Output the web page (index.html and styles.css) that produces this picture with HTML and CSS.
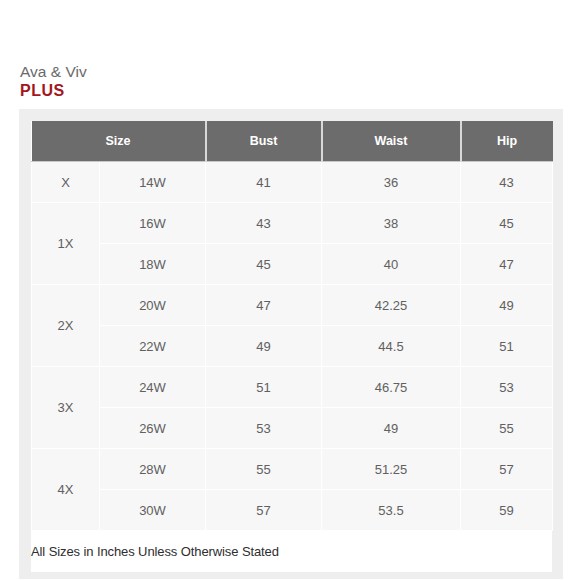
FILE: index.html
```html
<!DOCTYPE html>
<html>
<head>
<meta charset="utf-8">
<link rel="stylesheet" href="styles.css">
</head>
<body>
<div class="page">
  <div class="brand">
    <div class="brand-name">Ava &amp; Viv</div>
    <div class="brand-line">PLUS</div>
  </div>
  <div class="panel">
    <div class="sheet">
      <table class="chart">
        <colgroup>
          <col class="c1"><col class="c2"><col class="c3"><col class="c4"><col class="c5">
        </colgroup>
        <thead>
          <tr><th colspan="2">Size</th><th>Bust</th><th>Waist</th><th>Hip</th></tr>
        </thead>
        <tbody>
          <tr><td>X</td><td>14W</td><td>41</td><td>36</td><td>43</td></tr>
          <tr><td rowspan="2">1X</td><td>16W</td><td>43</td><td>38</td><td>45</td></tr>
          <tr><td>18W</td><td>45</td><td>40</td><td>47</td></tr>
          <tr><td rowspan="2">2X</td><td>20W</td><td>47</td><td>42.25</td><td>49</td></tr>
          <tr><td>22W</td><td>49</td><td>44.5</td><td>51</td></tr>
          <tr><td rowspan="2">3X</td><td>24W</td><td>51</td><td>46.75</td><td>53</td></tr>
          <tr><td>26W</td><td>53</td><td>49</td><td>55</td></tr>
          <tr><td rowspan="2">4X</td><td>28W</td><td>55</td><td>51.25</td><td>57</td></tr>
          <tr><td>30W</td><td>57</td><td>53.5</td><td>59</td></tr>
        </tbody>
      </table>
      <p class="note">All Sizes in Inches Unless Otherwise Stated</p>
    </div>
  </div>
</div>
</body>
</html>
```
FILE: styles.css
```css
html, body {
  margin: 0;
  padding: 0;
  background: #ffffff;
}
.page {
  padding: 63px 17px 0 19px;
  font-family: "Liberation Sans", Arial, sans-serif;
}
.brand {
  padding-left: 1px;
  margin-bottom: 9px;
}
.brand-name {
  font-size: 15.5px;
  line-height: 18px;
  color: #6a6a6a;
  letter-spacing: 0;
}
.brand-line {
  font-size: 16px;
  line-height: 19px;
  font-weight: bold;
  color: #a3161d;
  letter-spacing: 0.5px;
}
.panel {
  background: #eeeeee;
  padding: 12px 11px 7px 12px;
}
.sheet {
  background: #ffffff;
}
.chart {
  width: 100%;
  border-collapse: collapse;
  table-layout: fixed;
}
.c1 { width: 68px; }
.c2 { width: 106px; }
.c3 { width: 116px; }
.c4 { width: 139px; }
.c5 { width: 92px; }
.chart th {
  background: #6c6c6c;
  color: #ffffff;
  font-weight: bold;
  font-size: 12.5px;
  height: 40px;
  padding: 0;
  border-left: 2px solid #d8d8d8;
  border-bottom: 1px solid #c8c8c8;
}
.chart th:first-child {
  border-left: none;
}
.chart td {
  background: #f7f7f7;
  color: #606060;
  font-size: 13px;
  text-align: center;
  height: 40px;
  padding: 0;
  border: 1px solid #ffffff;
}
.note {
  margin: 0;
  height: 41px;
  line-height: 41px;
  font-size: 13px;
  color: #2e2e2e;
  letter-spacing: -0.1px;
}
```
